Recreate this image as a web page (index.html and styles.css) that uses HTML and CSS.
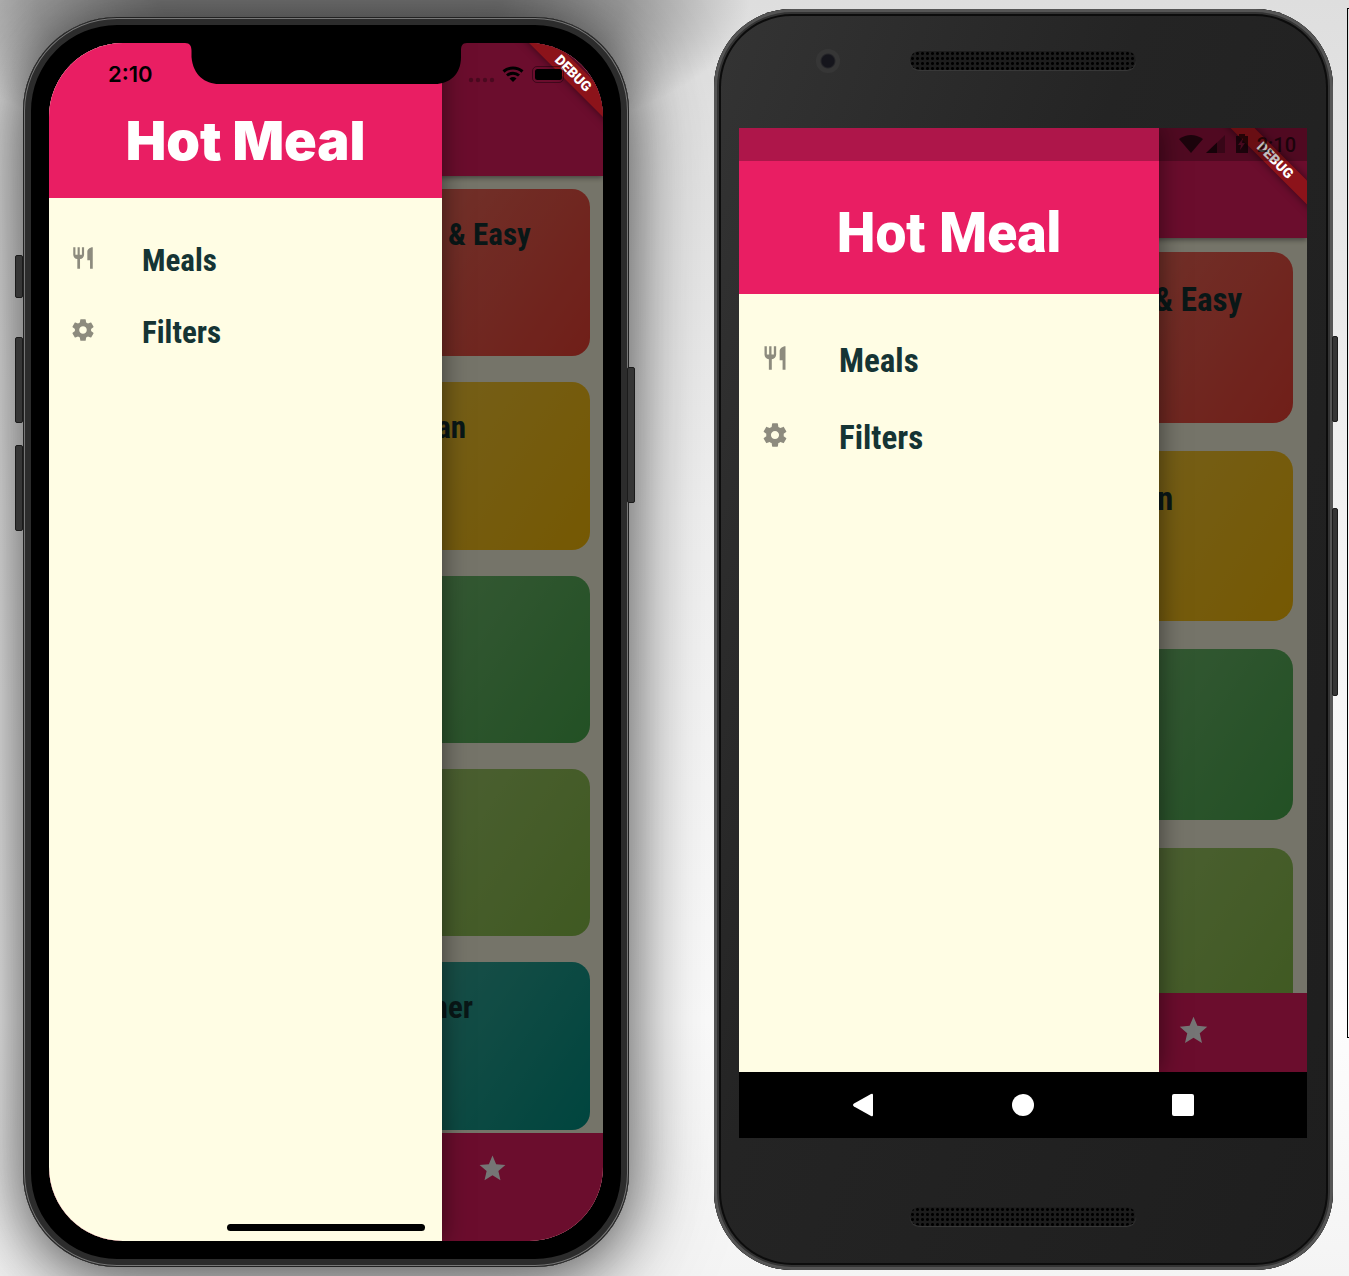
FILE: index.html
```html
<!DOCTYPE html>
<html lang="en">
<head>
<meta charset="utf-8">
<title>Hot Meal</title>
<link rel="stylesheet" href="styles.css">
</head>
<body>
<svg class="sprite" aria-hidden="true">
  <symbol id="dining" viewBox="0 0 24 24"><path d="M11 9H9V2H7v7H5V2H3v7c0 2.12 1.66 3.84 3.75 3.97V22h2.5v-9.03C11.34 12.84 13 11.12 13 9V2h-2v7zm5-3v8h2.5v8H21V2c-2.76 0-5 2.24-5 4z"/></symbol>
  <symbol id="gear" viewBox="0 0 24 24"><path d="M19.43 12.98c.04-.32.07-.64.07-.98s-.03-.66-.07-.98l2.11-1.65c.19-.15.24-.42.12-.64l-2-3.46c-.12-.22-.39-.3-.61-.22l-2.49 1c-.52-.4-1.08-.73-1.69-.98l-.38-2.65C14.46 2.18 14.25 2 14 2h-4c-.25 0-.46.18-.49.42l-.38 2.65c-.61.25-1.17.59-1.69.98l-2.49-1c-.23-.09-.49 0-.61.22l-2 3.46c-.13.22-.07.49.12.64l2.11 1.65c-.04.32-.07.65-.07.98s.03.66.07.98l-2.11 1.65c-.19.15-.24.42-.12.64l2 3.46c.12.22.39.3.61.22l2.49-1c.52.4 1.08.73 1.69.98l.38 2.65c.03.24.24.42.49.42h4c.25 0 .46-.18.49-.42l.38-2.65c.61-.25 1.17-.59 1.69-.98l2.49 1c.23.09.49 0 .61-.22l2-3.46c.12-.22.07-.49-.12-.64l-2.11-1.65zM12 15.5c-1.93 0-3.5-1.57-3.5-3.5s1.57-3.500 3.500-3.500 3.500 1.570 3.500 3.500-1.570 3.500-3.500 3.500z"/></symbol>
  <symbol id="star" viewBox="0 0 24 24"><path d="M12 17.270 18.180 21l-1.640-7.030L22 9.240l-7.190-.61L12 2 9.190 8.630 2 9.240l5.460 4.730L5.820 21z"/></symbol>
</svg>

<main class="stage">
  <section class="phone ios">
    <i class="key mute"></i><i class="key vol-up"></i><i class="key vol-down"></i><i class="key power"></i>
    <div class="screen">
      <div class="app">
        <header class="appbar"></header>
        <div class="grid">
          <article class="card red"><h2>Quick &amp; Easy</h2></article>
          <article class="card amber"><h2>German</h2></article>
          <article class="card green"></article>
          <article class="card lime"></article>
          <article class="card teal"><h2>Summer</h2></article>
        </div>
        <nav class="tabs"><button class="tab" aria-label="Favorites"><svg><use href="#star"/></svg></button></nav>
      </div>
      <div class="scrim"></div>
      <aside class="drawer">
        <h1>Hot Meal</h1>
        <a href="#meals"><svg><use href="#dining"/></svg><span>Meals</span></a>
        <a href="#filters"><svg><use href="#gear"/></svg><span>Filters</span></a>
      </aside>
      <div class="banner"><span>DEBUG</span></div>
      <div class="status">
        <time>2:10</time>
        <svg class="signals" viewBox="0 0 100 24">
          <g opacity=".3"><circle cx="5" cy="18" r="2.200"/><circle cx="12" cy="18" r="2.200"/><circle cx="19" cy="18" r="2.200"/><circle cx="26" cy="18" r="2.200"/></g>
          <g fill="none" stroke="#000" stroke-width="3"><path d="M37.500 9.500a14.500 14.500 0 0 1 19 0"/><path d="M41 13.500a9 9 0 0 1 12 0"/></g>
          <path d="M43.500 16.500a5.500 5.500 0 0 1 7 0L47 20z"/>
          <rect x="66.500" y="4.500" width="31" height="16" rx="4.500" fill="none" stroke="#000" opacity=".4"/>
          <rect x="69" y="7" width="27" height="11" rx="2.500"/>
        </svg>
      </div>
      <svg class="notch" viewBox="0 0 282 42"><path d="M0 0c5 0 6.500 3 6.500 8v6C8 32 20 41 34 41h216c14 0 26-9 26-27V8c0-5 1-8 6-8z"/></svg>
      <i class="home"></i>
    </div>
  </section>

  <section class="phone droid">
    <i class="key power"></i><i class="key vol"></i>
    <div class="bezel"><i class="camera"></i><i class="speaker"></i></div>
    <div class="screen">
      <div class="app">
        <header class="appbar"></header>
        <div class="grid">
          <article class="card red"><h2>Quick &amp; Easy</h2></article>
          <article class="card amber"><h2>German</h2></article>
          <article class="card green"></article>
          <article class="card lime"></article>
        </div>
        <nav class="tabs"><button class="tab" aria-label="Favorites"><svg><use href="#star"/></svg></button></nav>
      </div>
      <div class="scrim"></div>
      <aside class="drawer">
        <h1>Hot Meal</h1>
        <a href="#meals"><svg><use href="#dining"/></svg><span>Meals</span></a>
        <a href="#filters"><svg><use href="#gear"/></svg><span>Filters</span></a>
      </aside>
      <div class="status">
        <svg class="signals" viewBox="0 0 72 24">
          <path d="M0 6q12-8 24 0L12 20z" opacity=".65"/>
          <path d="M46 2v18H27z" opacity=".3"/><path d="M38 9.600V20H27z" opacity=".6"/>
          <path opacity=".65" fill-rule="evenodd" d="M57 3h3V1h6v2h3v17H57zM64 5l-5 7h3l-1 5 5-7h-3z"/>
        </svg>
        <time>2:10</time>
      </div>
      <div class="banner"><span>DEBUG</span></div>
    </div>
    <nav class="softkeys">
      <button aria-label="Back"><svg viewBox="0 0 24 24"><path d="M22 2v20q0 2-2 1L3 13.500q-2-1.500 0-3L20 1q2-1 2 1z"/></svg></button>
      <button aria-label="Home"><svg viewBox="0 0 24 24"><circle cx="12" cy="12" r="11"/></svg></button>
      <button aria-label="Overview"><svg viewBox="0 0 24 24"><rect x="1" y="1" width="22" height="22" rx="2"/></svg></button>
    </nav>
    <div class="bezel"><i class="speaker"></i></div>
  </section>
  <i class="edge"></i>
</main>
</body>
</html>
```
FILE: styles.css
```css
* { box-sizing: border-box; }
body {
  margin: 0;
  min-height: 100vh;
  overflow-x: hidden;
  font-family: Roboto, sans-serif;
  background:
    radial-gradient(ellipse 420px 160px at 330px 0, rgba(0,0,0,.45) 40%, rgba(0,0,0,.3) 70%, transparent),
    linear-gradient(#dedede, #f2f2f2 40%, #fdfdfd 80%, #f4f4f4);
}
.sprite { display: none; }
svg { fill: currentColor; flex: none; }
button { border: 0; padding: 0; background: none; color: inherit; }

.stage {
  position: relative;
  display: grid;
  grid-template-columns: 606fr 619fr;
  align-items: start;
  gap: 85px;
  padding: 9px 16px 6px 23px;
}
.phone { position: relative; }
.edge {
  position: absolute;
  right: 0; top: 8px;
  width: 2px; height: 1030px;
  border: solid #000;
  border-width: 1px 0 1px 1px;
}

/* Shared app screen */
.screen { display: grid; position: relative; overflow: hidden; background: #fffde4; }
.app, .scrim, .drawer { grid-area: 1 / 1; min-height: 0; }
.app { display: flex; flex-direction: column; }
.scrim { position: relative; z-index: 1; background: rgba(0,0,0,.54); }
.appbar { position: relative; flex: none; background: #e91e63; box-shadow: 0 2px 5px rgba(0,0,0,.4); }
.grid { display: grid; grid-template-columns: 1fr 1fr; align-content: start; }
.card { grid-column: 2; aspect-ratio: 3 / 2; }
.card h2 { margin: 0; white-space: nowrap; }
.card h2, .drawer a {
  font-family: "Roboto Condensed", "Liberation Sans Narrow", Roboto, sans-serif;
  font-weight: 700;
  color: #153434;
}
.red { background: linear-gradient(124deg, #f44336b3, #f44336); }
.amber { background: linear-gradient(124deg, #ffc107b3, #ffc107); }
.green { background: linear-gradient(124deg, #4caf50b3, #4caf50); }
.lime { background: linear-gradient(124deg, #8bc34ab3, #8bc34a); }
.teal { background: linear-gradient(124deg, #009688b3, #009688); }
.tabs { position: relative; display: grid; grid-template-columns: 3fr 2fr; flex: none; background: #e91e63; }
.tab { grid-column: 2; color: #fff; align-self: start; }

.drawer { z-index: 2; background: #fffde4; box-shadow: 0 0 24px rgba(0,0,0,.5); }
.drawer h1 {
  display: flex; align-items: center; justify-content: center;
  margin: 0; background: #e91e63; color: #fff; font-weight: 900; white-space: nowrap;
}
.drawer a { display: flex; align-items: center; text-decoration: none; }
.drawer a svg { color: #8d8b7e; }
.drawer a span { padding-top: 5px; }

.status { position: absolute; z-index: 4; inset: 0 0 auto; display: flex; align-items: center; color: #000; }
.banner {
  position: absolute; z-index: 4;
  transform: rotate(45deg);
  background: #8c131a; color: #fff;
  text-align: center; font-weight: 900;
  box-shadow: 0 0 8px rgba(0,0,0,.5);
}

/* iOS device */
.ios {
  margin-top: 8px;
  padding: 26px;
  border-radius: 94px;
  background: #000;
  box-shadow: inset 0 0 0 1px #222, inset 0 0 0 2px #777, inset 0 0 0 8px #2c2c2c, 0 10px 60px rgba(0,0,0,.55), 0 10px 110px rgba(0,0,0,.3);
}
.ios .screen { border-radius: 74px; }
.ios .appbar { height: 133px; }
.ios .grid { gap: 26px; padding: 13px 13px 3px; }
.ios .card { border-radius: 18px; padding: 28px 31px; }
.ios .card h2, .ios .drawer a { font-size: 31px; line-height: 36px; }
.ios .tabs { height: 108px; }
.ios .tab { padding-top: 20px; }
.ios .tab svg { width: 31px; height: 31px; }
.ios .drawer { width: 71%; }
.ios .drawer h1 { height: 155px; padding-top: 40px; margin-bottom: 24px; font-family: Inter, sans-serif; font-size: 54px; }
.ios .drawer a { height: 72px; padding-left: 21px; gap: 46px; }
.ios .drawer a svg { width: 26px; height: 26px; }
.ios .status { justify-content: space-between; height: 62px; padding: 0 37px 0 59px; }
.ios time { font: 600 22px Inter, sans-serif; }
.ios .signals { width: 100px; height: 24px; }
.ios .banner { top: 21px; right: -40px; width: 140px; font-size: 14px; line-height: 19px; }
.notch { position: absolute; z-index: 5; top: 0; left: 50%; width: 282px; height: 42px; margin-left: -141px; color: #000; }
.home { position: absolute; z-index: 5; bottom: 10px; left: 50%; width: 198px; height: 7px; margin-left: -99px; border-radius: 4px; background: #000; }

/* Android device */
.droid {
  padding: 6px 26px 0 25px;
  border-radius: 78px;
  background: linear-gradient(110deg, #343434, #242424 40%, #1e1e1e);
  box-shadow: inset 0 0 0 3px #555, inset 0 0 0 5px #333, inset 0 0 0 7px #0c0c0c;
}
.droid .screen { aspect-ratio: 568 / 944; }
.droid .app { height: 100%; }
.droid .appbar { height: 110px; }
.droid .grid { flex: 1; min-height: 0; overflow: hidden; gap: 28px; padding: 14px; }
.droid .card { border-radius: 20px; padding: 28px 34px; }
.droid .card h2, .droid .drawer a { font-size: 33px; line-height: 39px; }
.droid .tabs { height: 79px; }
.droid .tab { padding-top: 21px; }
.droid .tab svg { width: 33px; height: 33px; }
.droid .drawer { width: 74%; }
.droid .drawer h1 { height: 166px; padding-top: 44px; margin-bottom: 25px; font-size: 55px; }
.droid .drawer a { height: 77px; padding-left: 22px; gap: 50px; }
.droid .drawer a svg { width: 28px; height: 28px; }
.droid .status { justify-content: flex-end; gap: 6px; height: 33px; padding-right: 11px; background: rgba(0,0,0,.25); }
.droid time { font-size: 20px; font-weight: 500; color: #000a; }
.droid .signals { width: 72px; height: 24px; }
.droid .banner { z-index: 3; top: 24px; right: -38px; width: 140px; font-size: 14px; line-height: 17px; }
.bezel { position: relative; display: flex; align-items: center; justify-content: center; height: 113px; padding-bottom: 22px; }
.softkeys + .bezel { height: 132px; padding: 25px 0 0; }
.speaker {
  width: 226px; height: 19px; border-radius: 10px;
  background: radial-gradient(circle, #000 1px, transparent 2px) 0 0 / 5px 5px, #1d1d1d;
  box-shadow: 0 1px 1px #3a3a3a;
}
.camera {
  position: absolute; left: 77px; top: 34px;
  width: 24px; height: 24px; border-radius: 50%;
  background: radial-gradient(circle, #15151c 6px, #363636 8px);
}
.softkeys { display: flex; justify-content: center; gap: 136px; height: 66px; align-items: center; background: #000; color: #fff; }
.softkeys button, .softkeys svg { display: block; width: 24px; height: 24px; }

/* Hardware keys */
.key { position: absolute; width: 8px; border: 1px solid #1b1b1b; border-radius: 2px; background: #353535; }
.ios .key { left: -8px; }
.ios .mute { top: 238px; height: 43px; }
.ios .vol-up { top: 320px; height: 86px; }
.ios .vol-down { top: 428px; height: 86px; }
.ios .key.power { left: auto; right: -6px; top: 350px; height: 136px; }
.droid .key { right: -5px; width: 6px; }
.droid .power { top: 327px; height: 86px; }
.droid .vol { top: 499px; height: 188px; }
```
